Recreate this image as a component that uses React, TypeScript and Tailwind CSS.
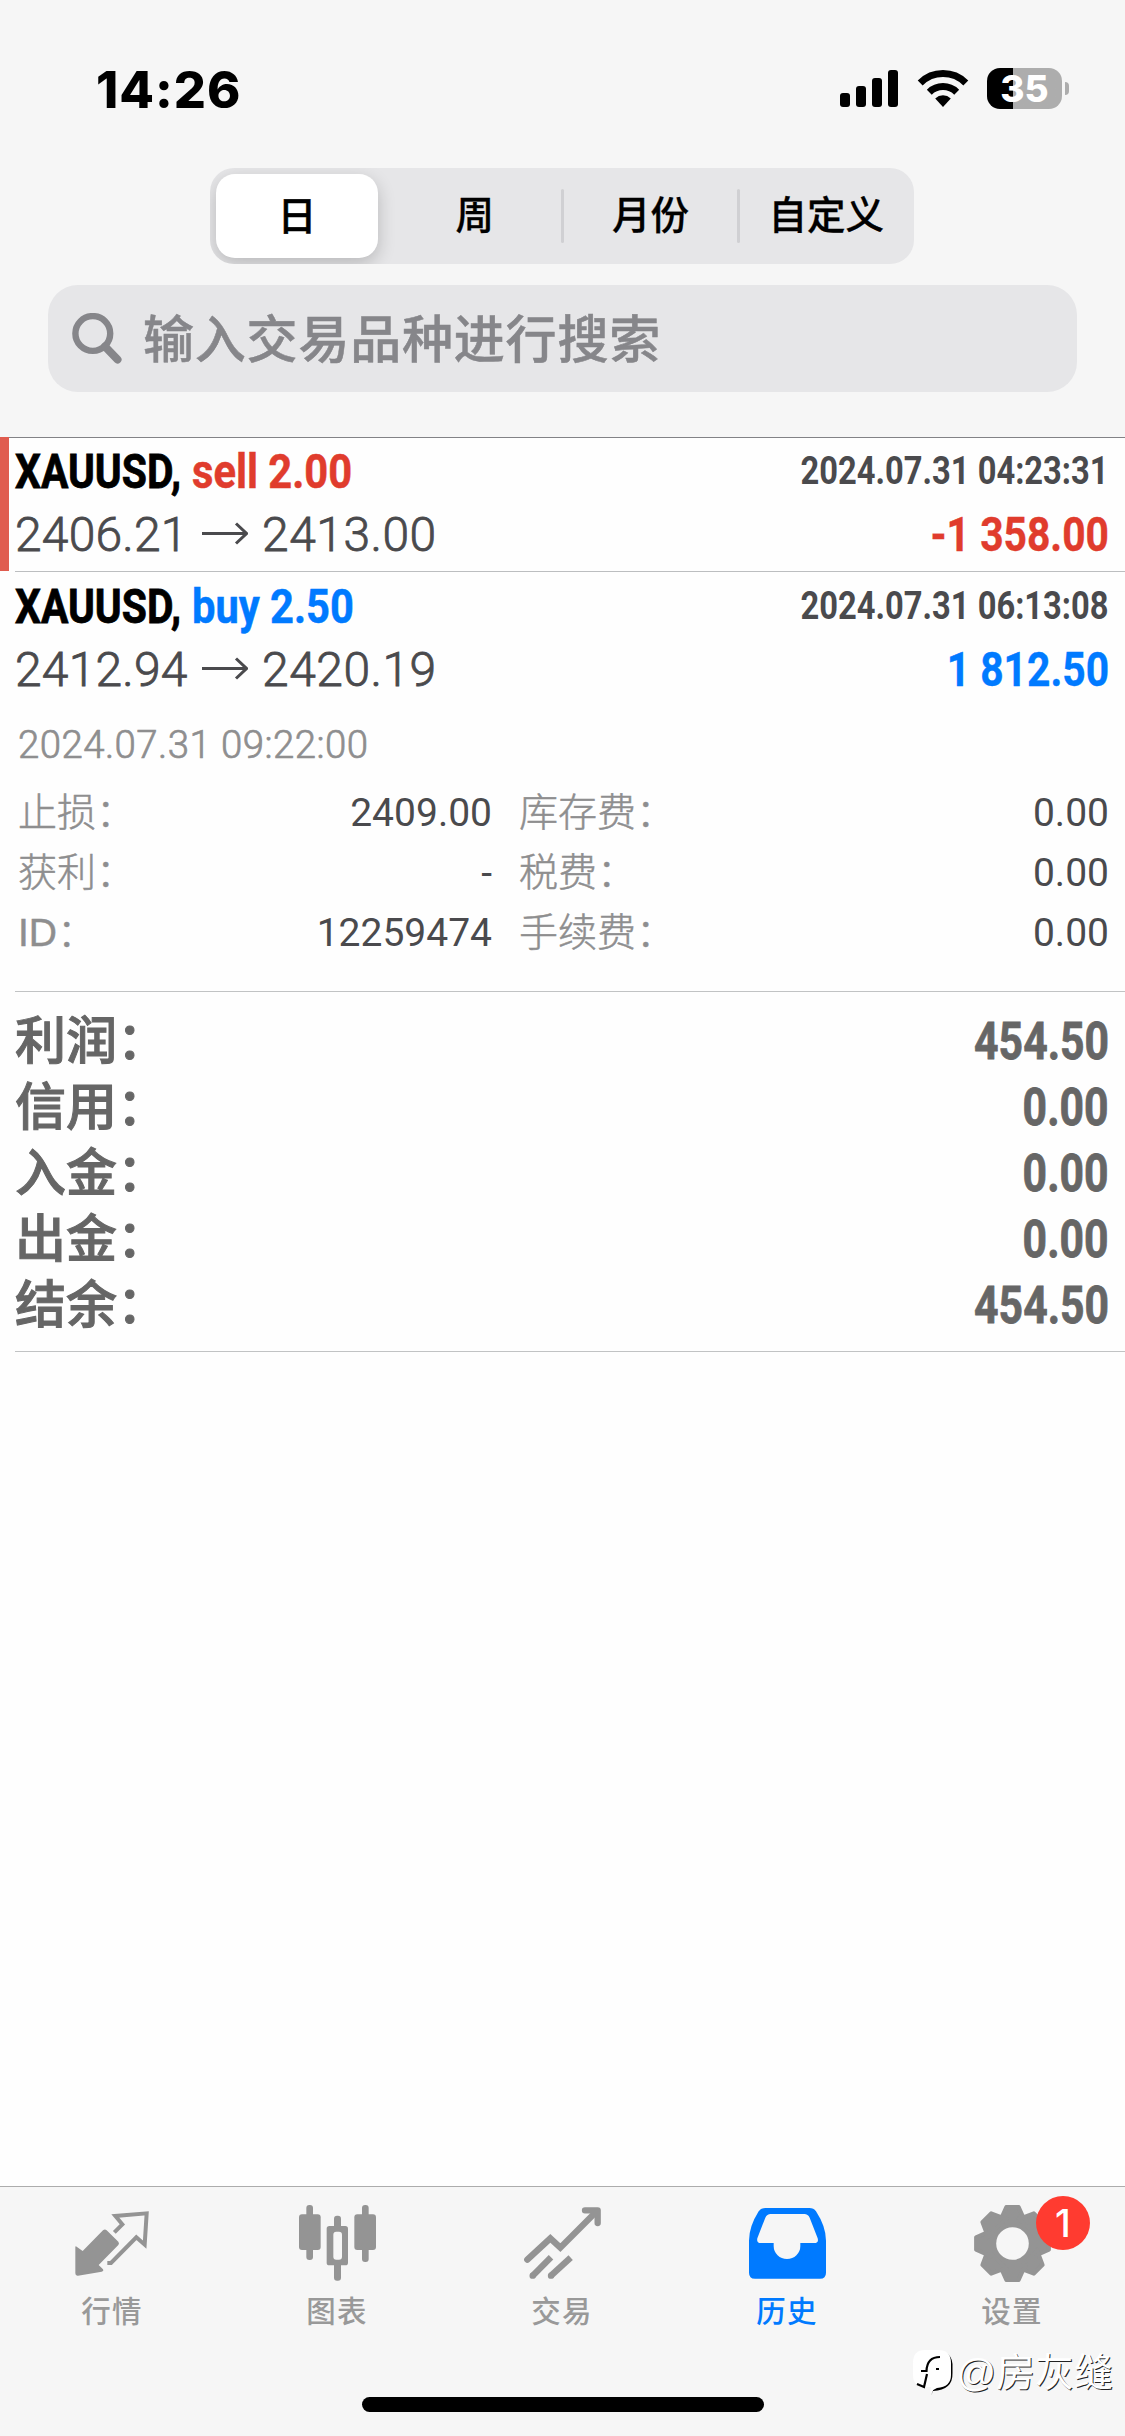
import React from 'react'

interface Field {
	label: string
	value: string
}

const periods = ['日', '周', '月份', '自定义']

const details: [Field, Field][] = [
	[
		{ label: '止损：', value: '2409.00' },
		{ label: '库存费：', value: '0.00' },
	],
	[
		{ label: '获利：', value: '-' },
		{ label: '税费：', value: '0.00' },
	],
	[
		{ label: 'ID：', value: '12259474' },
		{ label: '手续费：', value: '0.00' },
	],
]

const totals: Field[] = [
	{ label: '利润：', value: '454.50' },
	{ label: '信用：', value: '0.00' },
	{ label: '入金：', value: '0.00' },
	{ label: '出金：', value: '0.00' },
	{ label: '结余：', value: '454.50' },
]

const StatusBar = () => {
	return (
		<div className="h-[168px] pl-[96px] pr-[56px] pt-[57px] flex justify-between items-start">
			<p className="pt-[2px] font-['Inter'] font-extrabold text-[50.5px] leading-[62px] tracking-[1px] text-black">14:26</p>
			<div className="flex items-start pt-[11px]">
				<svg className="w-[58px] h-[40px]" viewBox="0 0 58 40">
					<rect x="0" y="25" width="10" height="14" rx="3" />
					<rect x="16" y="18" width="10" height="21" rx="3" />
					<rect x="32" y="10" width="10" height="29" rx="3" />
					<rect x="48" y="2" width="10" height="37" rx="3" />
				</svg>
				<svg className="w-[52px] h-[40px] ml-[19px]" viewBox="0 0 52 40">
					<path d="M26 39 L18.2 30.4 A11.5 11.5 0 0 1 33.8 30.4 Z" />
					<path d="M12.3 24.2 A19.6 19.6 0 0 1 39.7 24.2" fill="none" stroke="#000" strokeWidth="7" />
					<path d="M3.2 15 A32.3 32.3 0 0 1 48.8 15" fill="none" stroke="#000" strokeWidth="7" />
				</svg>
				<div className="ml-[18px] w-[75px] h-[41px] rounded-[13px] bg-linear-to-r from-black from-[26px] to-[#adadad] to-[26px] text-center font-['Inter'] font-extrabold text-[37px] leading-[41px] text-white">
					35
				</div>
				<div className="w-[4px] h-[13px] ml-[3px] mt-[14px] rounded-r-full bg-[#adadad]"></div>
			</div>
		</div>
	)
}

const PeriodTabs = () => {
	return (
		<div className="ml-[210px] w-[704px] h-[96px] pl-[6px] flex items-center rounded-[24px] bg-[#e6e6e8] overflow-hidden">
			{periods.map((item, key) => (
				<React.Fragment key={key}>
					{key > 1 && <div className="w-[3px] h-[54px] -mx-[1.5px] rounded-full bg-[#d0d0d3]"></div>}
					<div
						className={
							key === 0
								? 'w-[162px] mr-[9px] h-[84px] rounded-[19px] bg-white shadow-[0_6px_18px_rgba(0,0,0,0.2)] text-center text-[39px] leading-[86px] font-medium [-webkit-text-stroke:0.5px_currentColor] text-black'
								: 'flex-1 text-center text-[38.5px] leading-[86px] font-medium [-webkit-text-stroke:0.3px_currentColor] text-black'
						}
					>
						{item}
					</div>
				</React.Fragment>
			))}
		</div>
	)
}

const SearchBox = () => {
	return (
		<div className="mt-[21px] ml-[48px] w-[1029px] h-[107px] pl-[24px] flex items-center rounded-[30px] bg-[#e6e6e8]">
			<svg className="w-[50px] h-[52px]" viewBox="0 0 50 52" fill="none" stroke="#86868a">
				<circle cx="20.8" cy="20.5" r="17.4" strokeWidth="6.4" />
				<path d="M33 33.5 L45.5 46.5" strokeWidth="8" strokeLinecap="round" />
			</svg>
			<p className="mt-[3px] ml-[21px] text-[51px] tracking-[0.8px] leading-[107px] font-medium text-[#86868a] [-webkit-text-stroke:0.5px_currentColor]">
				输入交易品种进行搜索
			</p>
		</div>
	)
}

interface DealProps {
	side: string
	sideClass: string
	time: string
	open: string
	close: string
	profit: string
}

const Deal = ({ side, sideClass, time, open, close, profit }: DealProps) => {
	return (
		<div className="pl-[15px] pr-[16px] font-['Roboto']">
			<div className="h-[66px] flex justify-between font-bold">
				<div className="flex text-[48px] leading-[67px]">
					<span className="w-[177px] text-black whitespace-nowrap">
						<span className="inline-block origin-left scale-x-[0.85] [-webkit-text-stroke:0.8px_currentColor]">XAUUSD,</span>
					</span>
					<span className={sideClass}>
						<span className="inline-block origin-left scale-x-[0.868] [-webkit-text-stroke:0.5px_currentColor]">{side}</span>
					</span>
				</div>
				<span className="inline-block origin-right scale-x-[0.838] text-[39px] leading-[66px] text-[#4a4a4d]">{time}</span>
			</div>
			<div className="h-[60px] flex justify-between text-[48px] leading-[61px]">
				<div className="flex font-light text-[#4a4a4d] [-webkit-text-stroke:0.8px_currentColor]">
					<span className="w-[187px] tracking-[0.2px]">{open}</span>
					<svg className="w-[46px] h-[60px] mr-[14px]" viewBox="0 0 46 60" fill="none" stroke="#4a4a4d" strokeWidth="3">
						<path d="M0 29.5 H44" />
						<path d="M34 19.5 L44.5 29.5 L34 39.5" />
					</svg>
					<span className="tracking-[0.5px]">{close}</span>
				</div>
				<span className={sideClass}>
					<span className="inline-block font-bold origin-right scale-x-[0.85] [-webkit-text-stroke:0.4px_currentColor]">{profit}</span>
				</span>
			</div>
		</div>
	)
}

const DealDetails = () => {
	return (
		<div className="pl-[18px] pr-[16px] pb-[28px] text-[39px] leading-[60px]">
			<p className="mt-[16px] font-['Roboto'] font-light text-[38.4px] tracking-[0.45px] text-[#8e8e8f] [-webkit-text-stroke:0.7px_currentColor]">
				2024.07.31 09:22:00
			</p>
			<div className="mt-[8px]">
				{details.map(([left, right], key) => (
					<div key={key} className="flex text-[#8e8e8f]">
						<div className="w-[474px] flex justify-between">
							<span className="font-light [-webkit-text-stroke:0.5px_currentColor]">{left.label}</span>
							<span className="font-['Roboto'] text-[#4a4a4d]">{left.value}</span>
						</div>
						<div className="flex-1 ml-[27px] flex justify-between">
							<span className="font-light [-webkit-text-stroke:0.5px_currentColor]">{right.label}</span>
							<span className="font-['Roboto'] text-[#4a4a4d]">{right.value}</span>
						</div>
					</div>
				))}
			</div>
		</div>
	)
}

const Totals = () => {
	return (
		<div className="ml-[15px] pr-[16px] pt-[17px] pb-[12px] border-y border-[#c1c3c4] text-[#666666]">
			{totals.map((item, key) => (
				<div key={key} className="flex justify-between text-[51px] leading-[66px]">
					<span className="font-medium [-webkit-text-stroke:1px_currentColor]">{item.label}</span>
					<span className="inline-block font-['Roboto'] font-bold origin-right scale-x-[0.838] [-webkit-text-stroke:0.8px_currentColor]">{item.value}</span>
				</div>
			))}
		</div>
	)
}

const QuotesIcon = () => (
	<svg className="w-[77px] h-[77px]" viewBox="222 105 231 231">
		<path
			fill="#949494"
			d="M226 232 Q226 226 231 231 L248 243 L309 181 Q315 176 320 181 L355 215 Q359 220 355 225 L296 285 L309 298 Q312 304 305 305 L234 317 Q226 318 226 310 Z"
		/>
		<path fill="none" stroke="#949494" strokeWidth="12" d="M343 187 L367 163 L346 138 L440 130 L434 224 L409 202 L333 279 H322" />
	</svg>
)

const ChartIcon = () => (
	<svg className="w-[77px] h-[77px]" viewBox="897 105 231 231" fill="#949494">
		<rect x="919" y="105" width="20" height="165" rx="9" />
		<rect x="897" y="133" width="65" height="107" rx="9" />
		<rect x="1002" y="137" width="21" height="195" rx="9" />
		<rect x="980" y="168" width="64" height="118" rx="8" />
		<rect x="1000" y="185" width="26" height="84" rx="9" fill="#f6f6f6" />
		<rect x="1086" y="105" width="20" height="171" rx="9" />
		<rect x="1063" y="133" width="65" height="107" rx="9" />
	</svg>
)

const TradeIcon = () => (
	<svg className="w-[77px] h-[77px]" viewBox="132 105 231 231" fill="none" stroke="#949494" strokeWidth="19">
		<path strokeLinecap="round" d="M142 269 L211 205 L241 233 L350 124" />
		<path strokeLinecap="round" strokeLinejoin="round" d="M315 121 H353 V159" />
		<path d="M213 262 L158 317" />
		<path d="M272 263 L213 317" />
		<g fill="#949494" stroke="none">
			<circle cx="158" cy="317" r="9.5" />
			<circle cx="213" cy="317" r="9.5" />
		</g>
	</svg>
)

const HistoryIcon = () => (
	<svg className="w-[77px] h-[77px]" viewBox="807 105 231 231">
		<path
			fill="#007aff"
			fillRule="evenodd"
			d="M856 114 H988 Q1001 114 1008 124 Q1038 170 1038 212 V308 Q1038 326 1020 326 H825 Q807 326 807 308 V212 Q807 170 836 124 Q843 114 856 114 Z M872 132 Q861 132 856 143 L832 205 Q829 219 842 219 H881 V228 A40 39 0 0 0 961 228 V219 H1003 Q1017 219 1013 205 L989 143 Q984 132 973 132 Z"
		/>
	</svg>
)

const teeth = [0, 45, 90, 135, 180, 225, 270, 315]

const SettingsIcon = () => (
	<svg className="w-[77px] h-[77px]" viewBox="-38.5 -38.5 77 77">
		<g fill="#949494" stroke="#949494" strokeWidth="4" strokeLinejoin="round">
			<circle r="28" />
			{teeth.map((deg) => (
				<path key={deg} transform={`rotate(${deg})`} d="M-6.2 -36.4 H6.2 L10 -28 L13 -22 H-13 L-10 -28 Z" />
			))}
		</g>
		<circle r="16.3" fill="#f6f6f6" />
	</svg>
)

const tabs = [
	{ label: '行情', icon: <QuotesIcon /> },
	{ label: '图表', icon: <ChartIcon /> },
	{ label: '交易', icon: <TradeIcon /> },
	{ label: '历史', icon: <HistoryIcon />, active: true },
	{ label: '设置', icon: <SettingsIcon />, badge: 1 },
]

const TabBar = () => {
	return (
		<div className="relative h-[250px] border-t border-[#acacac] bg-[#f6f6f6] flex flex-col items-center">
			<ul className="w-full flex">
				{tabs.map((item, key) => (
					<li key={key} className="relative flex-1 pt-[18px] flex flex-col items-center">
						{item.icon}
						<p
							className={
								item.active
									? 'mt-[10px] pr-[1px] text-[29.5px] tracking-[1.2px] leading-[40px] font-medium text-[#007aff]'
									: 'mt-[10px] pr-[1px] text-[29.5px] tracking-[1.2px] leading-[40px] font-medium text-[#999999]'
							}
						>
							{item.label}
						</p>
						{item.badge && (
							<span className="absolute left-[136px] top-[9px] w-[54px] h-[54px] rounded-full bg-[#ff3b30] text-center font-['Inter'] font-medium text-[38px] leading-[54px] text-white">
								{item.badge}
							</span>
						)}
					</li>
				))}
			</ul>
			<div className="mt-auto mb-[24px] w-[402px] h-[15px] rounded-full bg-black"></div>
			<div className="absolute right-[12px] bottom-[39px] flex items-center text-white">
				<svg className="w-[42px] h-[48px]" viewBox="0 0 42 48">
					<path d="M19 47 L21 42 Q41 41 40.5 24 V15 Q40 7 34 4 Z" fill="#000" />
					<path d="M13 1 H26 Q39 1 39 14 V26 Q39 38 25 39 Q20 41 18 44 L19 38 H13 Q1 38 1 26 V14 Q1 1 13 1 Z" fill="#fff" />
					<path d="M9 22 H14.5 Q15 8 28 8 M15 25 L12 38 L5 35" fill="none" stroke="#000" strokeWidth="2.2" />
					<path d="M24 20 H27" stroke="#000" strokeWidth="2" />
				</svg>
				<span className="ml-[2px] text-[39px] leading-[48px] font-normal [text-shadow:1px_1px_0_#222]">@房灰缝</span>
			</div>
		</div>
	)
}

const App = () => {
	return (
		<div className="w-[1125px] h-[2436px] flex flex-col overflow-hidden bg-[#fefefe] font-['Liberation_Sans','Noto_Sans_CJK_SC',sans-serif]">
			<header className="h-[438px] border-b border-[#828286] bg-[#f6f6f6]">
				<StatusBar />
				<PeriodTabs />
				<SearchBox />
			</header>
			<main className="flex-1">
				<div className="relative h-[133px]">
					<Deal
						side="sell 2.00"
						sideClass="text-[#e03c2d]"
						time="2024.07.31 04:23:31"
						open="2406.21"
						close="2413.00"
						profit="-1 358.00"
					/>
					<div className="absolute left-0 top-[-1px] w-[9px] h-[134px] bg-[#e05c4f]"></div>
				</div>
				<div className="ml-[15px] h-px mb-px bg-[#bcbec0]"></div>
				<Deal
					side="buy 2.50"
					sideClass="text-[#007aff]"
					time="2024.07.31 06:13:08"
					open="2412.94"
					close="2420.19"
					profit="1 812.50"
				/>
				<DealDetails />
				<Totals />
			</main>
			<TabBar />
		</div>
	)
}

export default App
